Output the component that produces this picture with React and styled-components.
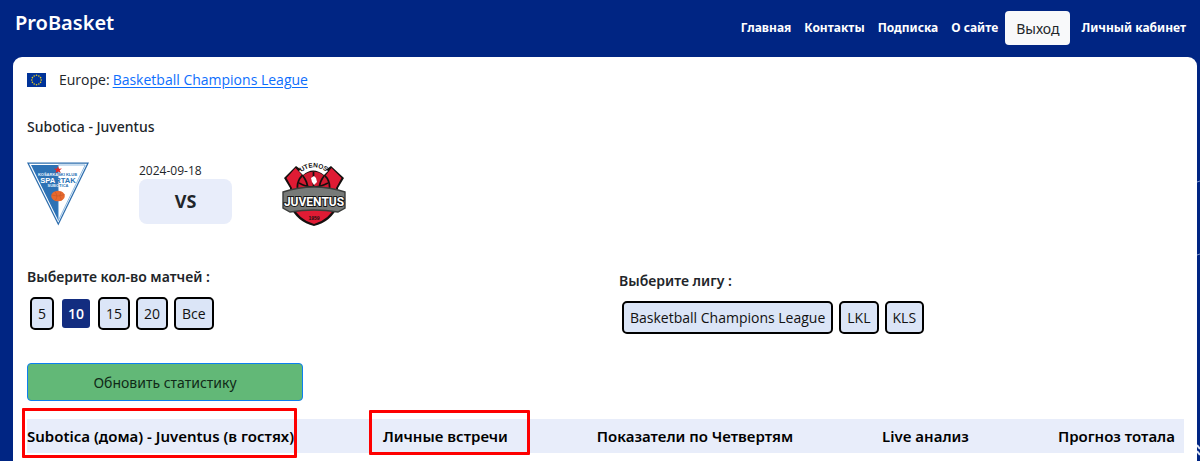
import React, { useState } from "react";
import styled, { createGlobalStyle, css } from "styled-components";

const bodyFont = `"Open Sans", "Noto Sans", sans-serif`;
const headingFont = `"Noto Sans", "Open Sans", sans-serif`;

const GlobalStyle = createGlobalStyle`
  *, *::before, *::after { box-sizing: border-box; }
  body {
    margin: 0;
    background: #002583;
    color: #212529;
    font-family: ${bodyFont};
    font-size: 14px;
    line-height: 20px;
  }
  button { font-family: inherit; cursor: pointer; }
`;

const Page = styled.div`
  position: relative;
  display: flex;
  flex-direction: column;
  min-height: 100vh;
`;

const Header = styled.header`
  display: flex;
  align-items: flex-start;
  justify-content: space-between;
  height: 57px;
  padding: 9px 14px 0 15px;
  font-family: ${headingFont};
`;

const Brand = styled.a`
  color: #fff;
  font-size: 20px;
  font-weight: 600;
  line-height: 28px;
  text-decoration: none;
`;

const Nav = styled.nav`
  display: flex;
  align-items: center;
  margin-top: 2px;
`;

const NavLink = styled.a`
  margin-left: ${(p) => (p.$first ? 0 : 13)}px;
  color: #fff;
  font-size: 12px;
  font-weight: 700;
  text-decoration: none;
  white-space: nowrap;
`;

const LogoutButton = styled.button`
  height: 34px;
  margin: 0 -2px 0 7px;
  padding: 0 11px;
  border: 0;
  border-radius: 4px;
  background: #f8f9fa;
  color: #212529;
  font-size: 14px;
`;

const Panel = styled.main`
  flex: 1;
  margin: 0 3px 0 13px;
  padding: 13px 13px 8px 14px;
  border-radius: 9px 9px 0 0;
  background: #fff;
`;

const League = styled.div`
  display: flex;
  align-items: center;
  font-weight: 500;
  svg { margin-right: 13px; }
  a { margin-left: 3px; color: #0d6efd; text-underline-offset: 2px; }
`;

const MatchTitle = styled.h1`
  margin: 27px 0 0;
  font-family: ${headingFont};
  font-size: 14px;
  font-weight: 500;
  line-height: 20px;
`;

const Teams = styled.section`
  display: flex;
  margin-top: 25px;
`;

const Versus = styled.div`
  width: 93px;
  margin: 0 50px;
`;

const MatchDate = styled.time`
  display: block;
  font-size: 12px;
  line-height: 17px;
`;

const VersusBadge = styled.div`
  border-radius: 8px;
  background: #e8edfa;
  color: #212529;
  font-size: 18px;
  font-weight: 700;
  line-height: 45px;
  text-align: center;
`;

const Filters = styled.section`
  display: grid;
  grid-template-columns: 1fr 1fr;
  column-gap: 27px;
  margin-top: 41px;
`;

const FilterGroup = styled.div`
  padding-top: ${(p) => (p.$lowered ? 4 : 0)}px;
`;

const FilterTitle = styled.h2`
  margin: 0 0 10px;
  font-family: ${headingFont};
  font-size: 14px;
  font-weight: 600;
  line-height: 20px;
`;

const Options = styled.div`
  display: flex;
  gap: 6px;
  padding-left: 3px;
`;

const Option = styled.button`
  height: 33px;
  padding: 0 6px;
  border: 2px solid #000;
  border-radius: 5px;
  background: #dbe5f7;
  background-clip: padding-box;
  color: #111;
  font-size: 14px;
  font-weight: 500;
  ${(p) =>
    p.$active &&
    css`
      border-color: transparent;
      background-color: #132d80;
      color: #fff;
      font-weight: 600;
    `}
`;

const RefreshButton = styled.button`
  display: block;
  width: 276px;
  height: 38px;
  margin-top: 29px;
  border: 1px solid #0d7ef0;
  border-radius: 4px;
  background: #62b877;
  color: #102a18;
  font-family: ${headingFont};
  font-size: 14px;
`;

const Tabs = styled.nav`
  display: flex;
  justify-content: space-between;
  margin-top: 18px;
  padding-right: 9px;
  background: #e8edfa;
  font-family: ${headingFont};
`;

const Tab = styled.button`
  position: relative;
  height: 34px;
  padding: 0;
  border: 0;
  background: none;
  color: #000;
  font-size: 15px;
  font-weight: 600;
  white-space: nowrap;
  ${(p) =>
    p.$frame &&
    css`
      &::after {
        content: "";
        position: absolute;
        inset: ${p.$frame};
        border: 3px solid #fe0000;
        border-radius: 1px;
      }
    `}
`;

const EdgeLines = styled.svg`
  position: absolute;
  top: 0;
  right: 0;
`;

function EuropeFlag() {
  const stars = Array.from({ length: 12 }, (_, i) => {
    const a = (i * Math.PI) / 6;
    return <circle key={i} cx={9.5 + 4.7 * Math.sin(a)} cy={7 - 4.7 * Math.cos(a)} r="0.8" />;
  });
  return (
    <svg width="19" height="14" viewBox="0 0 19 14" role="img" aria-label="Europe">
      <rect width="19" height="14" fill="#003399" />
      <g fill="#e8ce1c">{stars}</g>
    </svg>
  );
}

function SpartakLogo() {
  return (
    <svg width="62" height="64" viewBox="0 0 62 64" role="img" aria-label="Spartak Subotica">
      <path d="M0 .5H62L31.3 63.5Z" fill="#2b6cad" />
      <path d="M2 1.7H60L31.3 60.8Z" fill="#fff" />
      <path d="M4 3H31.3V58.6Z" fill="#2d72b5" />
      <path d="M31.3 3H58.2L31.3 58.6Z" fill="#fff" stroke="#5b9bd2" strokeWidth=".7" />
      <path d="M31 4.2l1 2.6 3-.2-2.3 1.7 1.1 2.8-2.8-1.6-2.6 1.6.8-2.7-2.3-1.9 3 .2z" fill="#e32b25" />
      <g fontFamily="Liberation Sans, sans-serif" fontWeight="700" textAnchor="middle">
        <text x="30.5" y="14.4" fontSize="4" fill="#e5f1fb">
          <tspan>KOŠARKA</tspan>
          <tspan fill="#2b72b5">ŠKI KLUB</tspan>
        </text>
        <text x="31" y="20.6" fontSize="7.6" fill="#fff">
          <tspan>SPA</tspan>
          <tspan fill="#2b72b5">RTAK</tspan>
        </text>
        <text x="31" y="25" fontSize="4" fill="#e5f1fb">
          <tspan>SUBO</tspan>
          <tspan fill="#2b72b5">TICA</tspan>
        </text>
      </g>
      <ellipse cx="31" cy="34" rx="6.8" ry="5.2" fill="#e8692d" />
      <path d="M24.5 33q6 2.3 13.3-.4M28 29.8q3.5 4 .5 8.4M34 29.5q-2.5 4.5.5 9" fill="none" stroke="#c65727" strokeWidth=".6" />
    </svg>
  );
}

function JuventusLogo() {
  return (
    <svg width="64" height="64" viewBox="0 0 64 64" role="img" aria-label="Utenos Juventus">
      <path d="M14 4L21 9Q31 0 42 9L49 4L62 16L56 26V44Q49 60 32 64Q15 60 8 44V26L2 16Z" fill="#15100f" />
      <path d="M13.5 6L20 13L44 13L49.5 6L59.5 16L54 26V43Q47 58 32 62Q17 58 10 43V26L4.5 16Z" fill="#e01b34" />
      <circle cx="31.5" cy="25" r="17" fill="#15100f" />
      <circle cx="31.5" cy="25" r="15.2" fill="#d31a31" />
      <path d="M31.5 10V38M17 21Q31 29 46 21M21 14Q30 26 21 36M42 14Q33 26 42 36" fill="none" stroke="#15100f" strokeWidth="1.7" />
      <path d="M17 9Q31-5 46 9L42 13Q31 4 21 13Z" fill="#fff" />
      <path id="utenos-arc" d="M17.5 11.5Q31.5-.5 46 11" fill="none" />
      <text fontFamily="Liberation Sans, sans-serif" fontSize="6.5" fontWeight="700" fill="#15100f">
        <textPath href="#utenos-arc" startOffset="50%" textAnchor="middle">UTENOS</textPath>
      </text>
      <path d="M29 16l3-2 2 2 1 4-3 3-2-3z" fill="#fff" />
      <path d="M1 30Q32 20 63 30V46L56 50Q32 46 8 50L1 46Z" fill="#777a78" stroke="#3b3d3b" strokeWidth="1.4" />
      <text
        x="32" y="43.5" textAnchor="middle" fontFamily="Roboto, sans-serif" fontSize="12" fontWeight="700"
        fill="#fff" stroke="#171717" strokeWidth="2" paintOrder="stroke"
      >
        JUVENTUS
      </text>
      <text x="32" y="57.5" textAnchor="middle" fontFamily="Liberation Sans, sans-serif" fontSize="5" fontWeight="700" fill="#15100f">1959</text>
    </svg>
  );
}

const COUNTS = ["5", "10", "15", "20", "Все"];
const LEAGUES = ["Basketball Champions League", "LKL", "KLS"];
const TABS = [
  { label: "Subotica (дома) - Juventus (в гостях)", frame: "-11px -3px -5px -5px" },
  { label: "Личные встречи", frame: "-9px -22px -2px -14px" },
  { label: "Показатели по Четвертям" },
  { label: "Live анализ" },
  { label: "Прогноз тотала" },
];

export default function App() {
  const [count, setCount] = useState("10");

  return (
    <Page>
      <GlobalStyle />
      <EdgeLines width="3" height="461" viewBox="0 0 3 461" aria-hidden="true">
        <path d="M0 182L3 181M0 255L3 254" stroke="#8298cb" />
        <path d="M0 445L3 449M0 451L3 455" stroke="#dfe6f5" strokeWidth="2" />
      </EdgeLines>
      <Header>
        <Brand href="#">ProBasket</Brand>
        <Nav>
          <NavLink href="#" $first>Главная</NavLink>
          <NavLink href="#">Контакты</NavLink>
          <NavLink href="#">Подписка</NavLink>
          <NavLink href="#">О сайте</NavLink>
          <LogoutButton type="button">Выход</LogoutButton>
          <NavLink href="#">Личный кабинет</NavLink>
        </Nav>
      </Header>
      <Panel>
        <League>
          <EuropeFlag />
          <span>Europe:</span>
          <a href="#">Basketball Champions League</a>
        </League>
        <MatchTitle>Subotica - Juventus</MatchTitle>
        <Teams>
          <SpartakLogo />
          <Versus>
            <MatchDate dateTime="2024-09-18">2024-09-18</MatchDate>
            <VersusBadge>VS</VersusBadge>
          </Versus>
          <JuventusLogo />
        </Teams>
        <Filters>
          <FilterGroup>
            <FilterTitle>Выберите кол-во матчей :</FilterTitle>
            <Options>
              {COUNTS.map((c) => (
                <Option key={c} type="button" $active={c === count} onClick={() => setCount(c)}>{c}</Option>
              ))}
            </Options>
          </FilterGroup>
          <FilterGroup $lowered>
            <FilterTitle>Выберите лигу :</FilterTitle>
            <Options>
              {LEAGUES.map((l) => (
                <Option key={l} type="button">{l}</Option>
              ))}
            </Options>
          </FilterGroup>
        </Filters>
        <RefreshButton type="button">Обновить статистику</RefreshButton>
        <Tabs>
          {TABS.map((t) => (
            <Tab key={t.label} type="button" $frame={t.frame}>{t.label}</Tab>
          ))}
        </Tabs>
      </Panel>
    </Page>
  );
}
